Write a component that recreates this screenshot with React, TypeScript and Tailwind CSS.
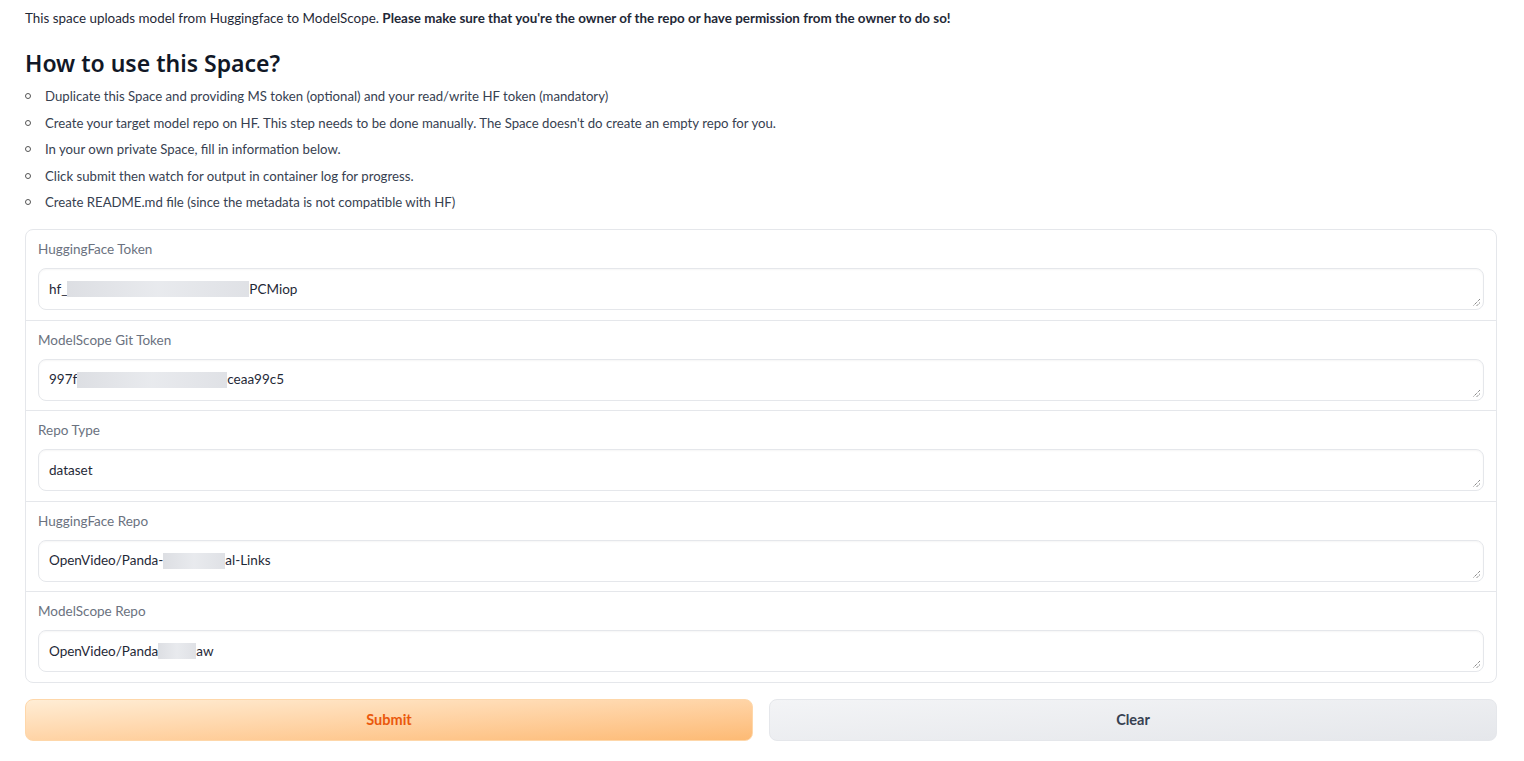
import React from "react"

type Field = {
  label: string
  parts: (string | { blur: number })[]
}

const fields: Field[] = [
  { label: "HuggingFace Token", parts: ["hf_", { blur: 182 }, "PCMiop"] },
  { label: "ModelScope Git Token", parts: ["997f", { blur: 150 }, "ceaa99c5"] },
  { label: "Repo Type", parts: ["dataset"] },
  { label: "HuggingFace Repo", parts: ["OpenVideo/Panda-", { blur: 62 }, "al-Links"] },
  { label: "ModelScope Repo", parts: ["OpenVideo/Panda", { blur: 38 }, "aw"] },
]

const steps = [
  "Duplicate this Space and providing MS token (optional) and your read/write HF token (mandatory)",
  "Create your target model repo on HF. This step needs to be done manually. The Space doesn't do create an empty repo for you.",
  "In your own private Space, fill in information below.",
  "Click submit then watch for output in container log for progress.",
  "Create README.md file (since the metadata is not compatible with HF)",
]

function Blur({ w }: { w: number }) {
  // pixelated patch standing in for the redacted token
  return (
    <span
      className="inline-block h-[16px] align-middle bg-gradient-to-r from-[#d9dbe0] via-[#e6e8ec] to-[#dcdee3] opacity-90"
      style={{ width: w }}
    />
  )
}

function Grip() {
  return (
    <svg className="absolute right-[2px] bottom-[2px]" width="9" height="9" viewBox="0 0 9 9">
      <path d="M8 1L1 8M8 4.5L4.5 8" stroke="#555" strokeWidth="1" strokeDasharray="1 1" />
    </svg>
  )
}

export default function App() {
  return (
    <div className="min-h-[761px] bg-white pl-[25px] pr-[27px] pt-[8px] text-[13.4px] text-[#1f2937] [font-family:'Lato','Liberation_Sans',sans-serif]">
      <p className="leading-[20px]">
        This space uploads model from Huggingface to ModelScope.{" "}
        <b className="font-bold">
          Please make sure that you're the owner of the repo or have permission from the owner to do so!
        </b>
      </p>
      <h2 className="mt-[20px] text-[23px] font-semibold leading-[30px] text-[#111827] [font-family:'Noto_Sans',sans-serif]">
        How to use this Space?
      </h2>
      <ul className="mt-[8px] flex flex-col gap-[6.5px] text-[13.2px] text-[#374151]">
        {steps.map((s) => (
          <li key={s} className="flex items-center leading-[20px]">
            <span className="mr-[14px] inline-block h-[6px] w-[6px] rounded-full border border-[#555]" />
            {s}
          </li>
        ))}
      </ul>

      <div className="mt-[17px] overflow-hidden rounded-[8px] border border-[#e5e7eb]">
        {fields.map((f, i) => (
          <div
            key={f.label}
            className={`px-[12px] pb-[9.5px] pt-[9px] ${i > 0 ? "border-t border-[#e5e7eb]" : ""}`}
          >
            <div className="mb-[9px] text-[13.5px] leading-[20px] text-[#6b7280]">{f.label}</div>
            <div className="relative flex h-[42px] items-center rounded-[8px] border border-[#e5e7eb] bg-white px-[10px] text-[13.5px] text-[#1f2937] shadow-[inset_0_1px_2px_rgba(0,0,0,0.04)]">
              {f.parts.map((p, j) =>
                typeof p === "string" ? <span key={j}>{p}</span> : <Blur key={j} w={p.blur} />
              )}
              <Grip />
            </div>
          </div>
        ))}
      </div>

      <div className="mt-[16px] grid grid-cols-2 gap-[16px]">
        <button className="h-[42px] rounded-[8px] border border-[#fed7aa] bg-gradient-to-br from-[#ffedd5] to-[#fdba74] text-[14.5px] font-bold text-[#ea580c]">
          Submit
        </button>
        <button className="h-[42px] rounded-[8px] border border-[#e5e7eb] bg-gradient-to-br from-[#f3f4f6] to-[#e5e7eb] text-[14.5px] font-bold text-[#374151]">
          Clear
        </button>
      </div>
    </div>
  )
}
